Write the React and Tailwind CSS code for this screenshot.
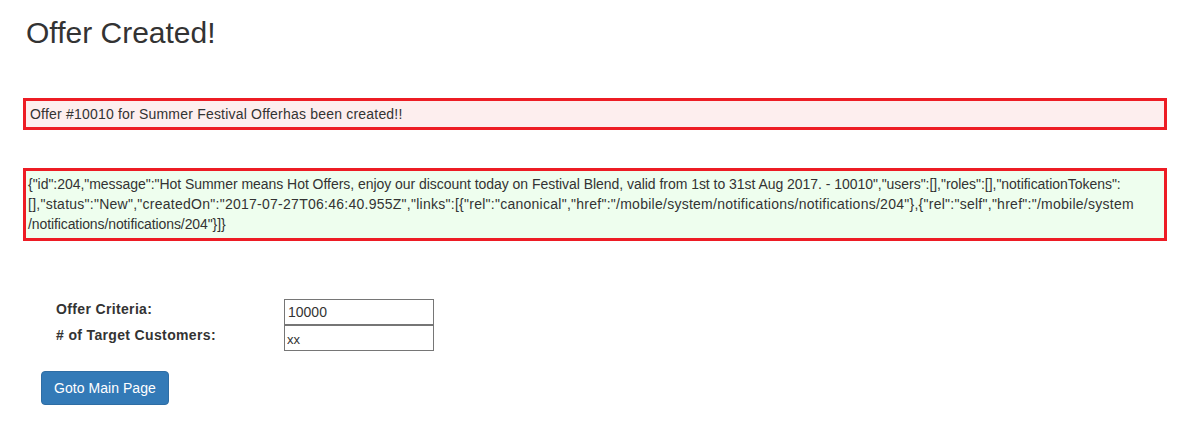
import React from "react";

const json1 =
  '{"id":204,"message":"Hot Summer means Hot Offers, enjoy our discount today on Festival Blend, valid from 1st to 31st Aug 2017. - 10010","users":[],"roles":[],"notificationTokens":';
const json2 =
  '[],"status":"New","createdOn":"2017-07-27T06:46:40.955Z","links":[{"rel":"canonical","href":"/mobile/system/notifications/notifications/204"},{"rel":"self","href":"/mobile/system';
const json3 = '/notifications/notifications/204"}]}';

export default function App() {
  return (
    <div
      className="min-h-[437px] bg-white pl-[23px] pr-[28px] pt-[16px] text-[#333333]"
      style={{ fontFamily: '"Liberation Sans", Arial, sans-serif' }}
    >
      <h1 className="ml-[3px] text-[30px] leading-[33px] font-normal">
        Offer Created!
      </h1>

      <div className="mt-[49px] border-[3px] border-[#ed1c24] bg-[#fdeeee] px-[4px] py-[3px] text-[14px] leading-[20px] tracking-[0.2px]">
        Offer #10010 for Summer Festival Offerhas been created!!
      </div>

      <div className="mt-[38px] whitespace-nowrap border-[3px] border-[#ed1c24] bg-[#eefeee] pl-[2px] pt-[3px] pb-[4px] text-[14px] leading-[20px]">
        <span className="tracking-[-0.04px]">{json1}</span>
        <br />
        <span className="tracking-[0.26px]">{json2}</span>
        <br />
        <span className="tracking-[-0.1px]">{json3}</span>
      </div>

      <div className="mt-[58px] ml-[33px] grid grid-cols-[228px_150px] text-[14px] leading-[20px]">
        <label htmlFor="criteria" className="font-bold tracking-[0.35px]">
          Offer Criteria:
        </label>
        <input
          id="criteria"
          type="text"
          defaultValue="10000"
          className="h-[26px] w-[150px] border border-[#767676] bg-white px-[3px] text-[14px] outline-none"
        />
        <label htmlFor="customers" className="font-bold tracking-[0.35px]">
          # of Target Customers:
        </label>
        <input
          id="customers"
          type="text"
          defaultValue="xx"
          className="h-[26px] w-[150px] border border-[#767676] bg-white px-[2px] pt-[2px] text-[13px] outline-none"
        />
      </div>

      <button
        type="button"
        className="mt-[20px] ml-[18px] rounded-[4px] border border-[#2e6da4] bg-[#337ab7] px-3 py-1.5 text-[14px] leading-[20px] tracking-[0.05px] text-white"
      >
        Goto Main Page
      </button>
    </div>
  );
}
